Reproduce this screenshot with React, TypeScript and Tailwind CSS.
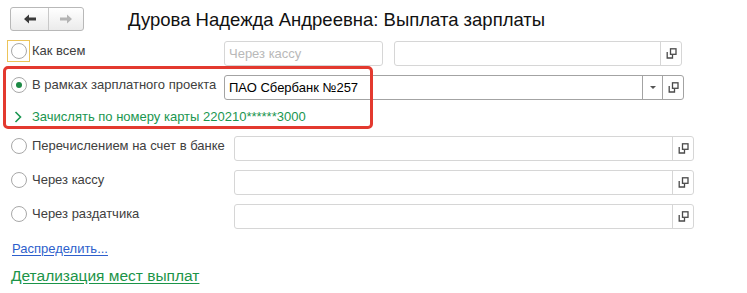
import React from 'react';

const CopyIcon = () => (
  <svg width="11" height="11" viewBox="0 0 11 11" fill="none" stroke="#4a4a4a" strokeWidth="1.3">
    <rect x="4.5" y="0.8" width="5.5" height="5.5" />
    <path d="M1.2 4 V10 H6.5 V7" />
  </svg>
);

const Radio = ({ checked = false, focused = false }: { checked?: boolean; focused?: boolean }) => (
  <div className={`w-[23px] h-[22px] flex items-center justify-center border ${focused ? 'border-[#ecc45a]' : 'border-transparent'}`}>
    <div className="w-[16px] h-[16px] rounded-full border border-[#a8a8a8] bg-white flex items-center justify-center">
      {checked && <div className="w-[6px] h-[6px] rounded-full bg-[#1d8a45]" />}
    </div>
  </div>
);

const Field = ({ width, dark = false, dropdown = false, text = '' }: { width: string; dark?: boolean; dropdown?: boolean; text?: string }) => (
  <div className={`${width} h-[25px] flex border rounded-[3px] bg-white ${dark ? 'border-[#a3a3a3]' : 'border-[#d6d6d6]'}`}>
    <div className="flex-1 flex items-center pl-[4px] text-[13px] text-black">{text}</div>
    {dropdown && (
      <div className={`w-[20px] flex items-center justify-center border-l ${dark ? 'border-[#a3a3a3]' : 'border-[#d6d6d6]'}`}>
        <div className="w-0 h-0 border-l-[3px] border-r-[3px] border-t-[3px] border-l-transparent border-r-transparent border-t-[#555]" />
      </div>
    )}
    <div className={`w-[21px] flex items-center justify-center border-l ${dark ? 'border-[#a3a3a3]' : 'border-[#d6d6d6]'}`}>
      <CopyIcon />
    </div>
  </div>
);

const Option = ({ label, left, checked = false, focused = false }: { label: string; left: string; checked?: boolean; focused?: boolean }) => (
  <div className={`${left} flex items-center pl-[7px] pb-[6px]`}>
    <Radio checked={checked} focused={focused} />
    <span className="ml-[2px] leading-[16px]">{label}</span>
  </div>
);

export default function App() {
  return (
    <div className="relative w-[747px] h-[293px] bg-white text-[13px] text-[#404040] overflow-hidden" style={{ fontFamily: '"Liberation Sans", Arial, sans-serif' }}>
      {/* header */}
      <div className="flex items-center pt-[6px] pl-[10px]">
        <div className="flex w-[74px] h-[24px] border border-[#b8b8b8] rounded-[3px] bg-gradient-to-b from-white to-[#ebebeb]">
          <div className="w-[38px] flex items-center justify-center border-r border-[#c8c8c8]">
            <svg width="12" height="10" viewBox="0 0 12 10">
              <path d="M0 5 L5 0.5 V3.6 H12 V6.4 H5 V9.5 Z" fill="#3a3a3a" />
            </svg>
          </div>
          <div className="flex-1 flex items-center justify-center">
            <svg width="12" height="10" viewBox="0 0 12 10">
              <path d="M12 5 L7 0.5 V3.6 H0 V6.4 H7 V9.5 Z" fill="#b4b4b4" />
            </svg>
          </div>
        </div>
        <h1 className="ml-[44px] mt-[3px] text-[18.5px] leading-[22px] text-[#111]">Дурова Надежда Андреевна: Выплата зарплаты</h1>
      </div>

      {/* row 1 */}
      <div className="flex items-center mt-[10px] h-[25px]">
        <Option label="Как всем" left="w-[224px]" focused />
        <div className="w-[159px] h-[25px] border border-[#d6d6d6] rounded-[3px] flex items-center pl-[4px] text-[13px] text-[#b9b9b9]">Через кассу</div>
        <div className="ml-[11px]">
          <Field width="w-[288px]" />
        </div>
      </div>

      {/* row 2 */}
      <div className="flex items-center mt-[9px] h-[25px]">
        <Option label="В рамках зарплатного проекта" left="w-[224px]" checked />
        <Field width="w-[460px]" dark dropdown text="ПАО Сбербанк №257" />
      </div>

      <div className="flex items-center mt-[9px] h-[16px] pl-[14px] text-[#1a9650]">
        <svg width="8" height="12" viewBox="0 0 8 12" fill="none" stroke="#1a9650" strokeWidth="1.6">
          <path d="M1.5 1 L6.5 6 L1.5 11" />
        </svg>
        <span className="ml-[10px]">Зачислять по номеру карты 220210******3000</span>
      </div>

      {/* rows 3-5 */}
      <div className="flex flex-col gap-[9px] mt-[11px]">
        {['Перечислением на счет в банке', 'Через кассу', 'Через раздатчика'].map((label) => (
          <div key={label} className="flex items-center h-[25px]">
            <Option label={label} left="w-[234px]" />
            <Field width="w-[460px]" />
          </div>
        ))}
      </div>

      <div className="mt-[12px] pl-[12px] leading-[16px]">
        <span className="text-[#2e5fcc] underline underline-offset-2">Распределить...</span>
      </div>
      <div className="mt-[10px] pl-[11px] leading-[18px] text-[15.5px]">
        <span className="text-[#1b9448] underline underline-offset-2">Детализация мест выплат</span>
      </div>

      {/* annotation box */}
      <div className="absolute left-[3px] top-[66px] w-[370px] h-[63px] border-[3px] border-[#e3392f] rounded-[5px] pointer-events-none" />
    </div>
  );
}
